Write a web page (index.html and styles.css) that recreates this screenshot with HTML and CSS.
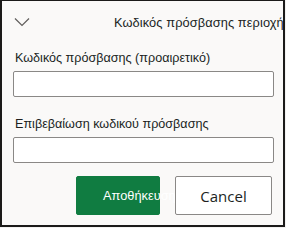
FILE: index.html
```html
<!DOCTYPE html>
<html lang="el">

<head>
    <meta charset="UTF-8">
    <meta name="viewport" content="width=device-width, initial-scale=1.0">
    <title>Κωδικός πρόσβασης περιοχής</title>
    <link rel="stylesheet" href="styles.css">
</head>

<body>
    <div class="panel">
        <div class="head">
            <svg class="chevron" width="16" height="10" viewBox="0 0 16 10">
                <path d="M1 1.5 L8 8.5 L15 1.5" fill="none" stroke="#605e5c" stroke-width="1.2" />
            </svg>
            <span class="title">Κωδικός πρόσβασης περιοχής</span>
        </div>
        <label class="label">Κωδικός πρόσβασης (προαιρετικό)</label>
        <input type="password" class="field">
        <label class="label second">Επιβεβαίωση κωδικού πρόσβασης</label>
        <input type="password" class="field">
        <div class="buttons">
            <button class="save">Αποθήκευση</button>
            <button class="cancel">Cancel</button>
        </div>
    </div>
</body>

</html>
```

FILE: styles.css
```css
* {
    margin: 0;
    padding: 0;
    box-sizing: border-box;
}

body {
    width: 286px;
    height: 228px;
    background-color: #f3f2f1;
    font-family: "Liberation Sans", Arial, sans-serif;
    overflow: hidden;
}

.panel {
    width: 285px;
    height: 227px;
    border: 2px solid #1b1a19;
    border-top-width: 1px;
    background-color: #faf9f8;
    padding: 0 10px 0 11px;
    display: flex;
    flex-direction: column;
    overflow: hidden;
}

.head {
    height: 40px;
    display: flex;
    align-items: flex-start;
    white-space: nowrap;
}

.chevron {
    margin: 16px 0 0 1px;
    flex: none;
}

.title {
    margin: 14px 0 0 84px;
    font-size: 12.8px;
    letter-spacing: 0.1px;
    color: #201f1e;
}

.label {
    font-size: 12.6px;
    line-height: 16px;
    color: #201f1e;
    margin: 9px 0 5px 2px;
}

.label.second {
    margin-top: 19px;
}

.field {
    width: 261px;
    height: 26px;
    border: 1px solid #8a8886;
    border-radius: 2px;
    background-color: #fff;
}

.buttons {
    display: flex;
    justify-content: flex-end;
    gap: 15px;
    margin-top: 13px;
    padding-right: 1px;
}

.buttons button {
    height: 39px;
    border-radius: 2px;
    white-space: nowrap;
}

.save {
    width: 84px;
    padding-left: 26px;
    text-align: left;
    overflow: visible;
    background-color: #107c41;
    border: 1px solid #107c41;
    color: #fff;
    font-family: "Liberation Sans", Arial, sans-serif;
    font-size: 12.8px;
}

.cancel {
    position: relative;
    width: 97px;
    background-color: #fff;
    border: 1px solid #8a8886;
    color: #201f1e;
    font-family: "Open Sans", sans-serif;
    font-size: 15px;
}
```
